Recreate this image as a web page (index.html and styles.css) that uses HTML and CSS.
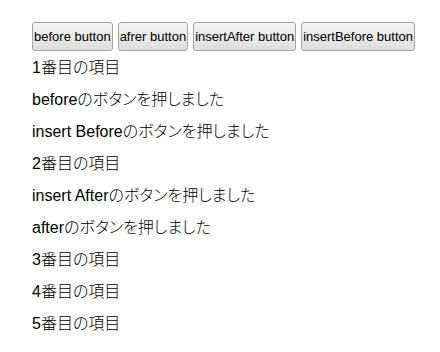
FILE: index.html
```html
<!DOCTYPE html>
<html lang="ja">
<head>
<meta charset="utf-8">
<link rel="stylesheet" href="styles.css">
</head>
<body>
<div class="page">
  <div class="buttons">
    <button class="btn">before button</button>
    <button class="btn">afrer button</button>
    <button class="btn">insertAfter button</button>
    <button class="btn">insertBefore button</button>
  </div>
  <div class="list">
    <div class="item">1番目の項目</div>
    <div class="item">beforeのボタンを押しました</div>
    <div class="item">insert Beforeのボタンを押しました</div>
    <div class="item">2番目の項目</div>
    <div class="item">insert Afterのボタンを押しました</div>
    <div class="item">afterのボタンを押しました</div>
    <div class="item">3番目の項目</div>
    <div class="item">4番目の項目</div>
    <div class="item">5番目の項目</div>
  </div>
</div>
</body>
</html>
```
FILE: styles.css
```css
html, body {
  margin: 0;
  padding: 0;
  background: #ffffff;
}
.page {
  padding: 22px 0 0 32px;
  font-family: "Liberation Sans", "Noto Sans CJK JP", sans-serif;
  color: #000000;
}
.buttons {
  display: flex;
  gap: 5px;
  height: 29px;
}
.btn {
  font-family: "Liberation Sans", Arial, sans-serif;
  font-size: 13px;
  color: #000000;
  height: 29px;
  padding: 0 1px;
  margin: 0;
  border: 1px solid #a3a3a3;
  border-radius: 3px;
  background: linear-gradient(#f3f3f3, #dedede);
}
.list {
  margin-top: 1px;
}
.item {
  font-size: 16px;
  font-weight: 300;
  line-height: 32px;
  height: 32px;
  white-space: nowrap;
  font-feature-settings: "palt";
}
```
